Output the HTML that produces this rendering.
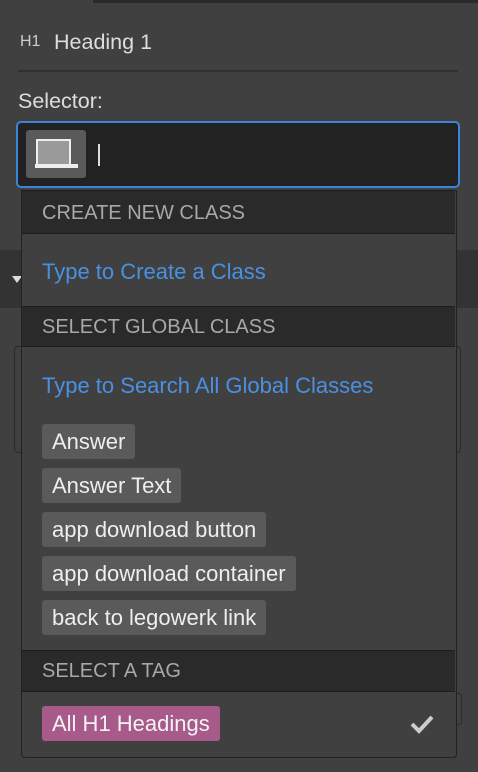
<!DOCTYPE html>
<html><head><style>
body{margin:0;width:478px;height:772px;background:#404040;font-family:"Liberation Sans",sans-serif;position:relative;overflow:hidden}
.a{position:absolute}
.hd{position:absolute;left:22px;width:433px;background:#2a2a2a;color:#a8a8a8;font-size:20px;box-sizing:border-box;padding-left:20px;border-top:1px solid #1e1e1e;border-bottom:1px solid #1e1e1e}
.chip{position:absolute;left:42px;height:35px;line-height:36px;background:#5a5a5a;color:#eee;font-size:22px;padding:0 10px;border-radius:3px}
.blue{position:absolute;left:42px;color:#4a90e2;font-size:22px}
</style></head><body>
<div class="a" style="left:93px;top:0;width:385px;height:3px;background:#2a2a2a"></div>
<div class="a" style="left:20px;top:33px;color:#ccc;font-size:16px">H1</div>
<div class="a" style="left:54px;top:30px;color:#ddd;font-size:21.5px">Heading 1</div>
<div class="a" style="left:18px;top:70px;width:440px;height:2px;background:#303030"></div>
<div class="a" style="left:18px;top:89px;color:#ddd;font-size:21.5px">Selector:</div>
<div class="a" style="left:16px;top:121px;width:440px;height:63px;border:2px solid #3b84d8;border-radius:5px;background:#222"></div>
<div class="a" style="left:26px;top:130px;width:60px;height:48px;background:#5a5a5a;border-radius:3px"></div>
<svg class="a" style="left:35px;top:138px" width="44" height="32"><rect x="2" y="2" width="33" height="25" fill="#9a9a9a" stroke="#eee" stroke-width="2"/><rect x="0" y="26" width="43" height="4" fill="#eee"/></svg>
<div class="a" style="left:98px;top:144px;width:2px;height:22px;background:#ddd"></div>
<div class="a" style="left:0;top:250px;width:478px;height:58px;background:#333"></div>
<div class="a" style="left:12px;top:276px;border-left:5px solid transparent;border-right:5px solid transparent;border-top:7px solid #ddd"></div>
<div class="a" style="left:14px;top:346px;width:445px;height:105px;border:1px solid #2a2a2a;border-radius:4px"></div>
<div class="a" style="left:455px;top:693px;width:5px;height:30px;border:1px solid #2a2a2a;border-radius:3px"></div>
<div class="a" style="left:21px;top:190px;width:434px;height:566px;background:#404040;border:1px solid #222;border-radius:0 0 4px 4px"></div>
<div class="hd" style="top:190px;height:44px;line-height:45px">CREATE NEW CLASS</div>
<div class="blue" style="top:259px">Type to Create a Class</div>
<div class="hd" style="top:306px;height:41px;line-height:41px">SELECT GLOBAL CLASS</div>
<div class="blue" style="top:373px">Type to Search All Global Classes</div>
<div class="chip" style="top:424px">Answer</div>
<div class="chip" style="top:468px">Answer Text</div>
<div class="chip" style="top:512px">app download button</div>
<div class="chip" style="top:556px">app download container</div>
<div class="chip" style="top:600px">back to legowerk link</div>
<div class="hd" style="top:650px;height:42px;line-height:41px">SELECT A TAG</div>
<div class="chip" style="top:706px;background:#a85a8a;color:#f3f3f3">All H1 Headings</div>
<svg class="a" style="left:410px;top:714px" width="24" height="20"><path d="M2 10 L9 17 L22 3" fill="none" stroke="#ccc" stroke-width="4"/></svg>
</body></html>
